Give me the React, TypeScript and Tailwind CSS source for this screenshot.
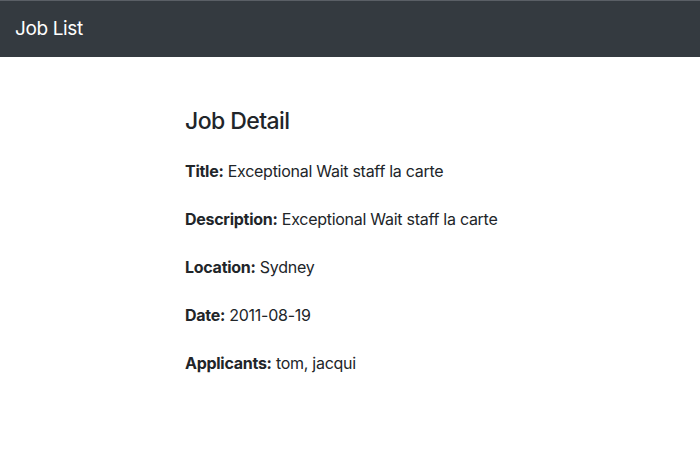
const job = {
  title: 'Exceptional Wait staff la carte',
  description: 'Exceptional Wait staff la carte',
  location: 'Sydney',
  date: '2011-08-19',
  applicants: ['tom', 'jacqui'],
}

function Field({ label, value }: { label: string; value: string }) {
  return (
    <p className="leading-6">
      <strong className="font-bold">{label}:</strong> {value}
    </p>
  )
}

export default function App() {
  return (
    <div className="min-h-[449px] bg-white font-['Inter',sans-serif] text-[16px] tracking-[-0.017em] text-[#212529]">
      {/* Navbar */}
      <nav className="flex h-[57px] items-center border-t border-[#5a5f66] bg-[#343a40] pl-[15px] pr-4">
        <span className="text-[19px] tracking-[-0.02em] text-white">Job List</span>
      </nav>

      {/* Detail */}
      <div className="mx-auto w-[540px] pl-[105px] pt-[51px]">
        <h4 className="mb-[23px] text-[23px] font-medium leading-[1.2] tracking-[-0.025em]">Job Detail</h4>
        <div className="flex flex-col gap-6">
          <Field label="Title" value={job.title} />
          <Field label="Description" value={job.description} />
          <Field label="Location" value={job.location} />
          <Field label="Date" value={job.date} />
          <Field label="Applicants" value={job.applicants.join(', ')} />
        </div>
      </div>
    </div>
  )
}
